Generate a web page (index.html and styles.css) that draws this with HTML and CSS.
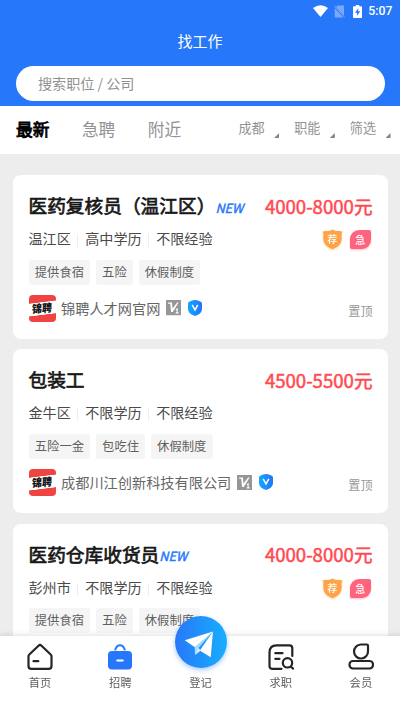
FILE: index.html
```html
<!DOCTYPE html>
<html lang="zh-CN">
<head>
<meta charset="utf-8">
<title>找工作</title>
<link rel="stylesheet" href="styles.css">
</head>
<body>
<svg class="defs" width="0" height="0" aria-hidden="true">
  <defs>
    <linearGradient id="blue" x1="0" y1="0" x2="1" y2="0"><stop offset="0" stop-color="#2878f8"/><stop offset="1" stop-color="#17aeff"/></linearGradient>
    <linearGradient id="shieldBlue" x1="0" y1="0" x2="1" y2="0"><stop offset="0" stop-color="#10a8ff"/><stop offset="1" stop-color="#2474f8"/></linearGradient>
  </defs>
  <symbol id="v1" viewBox="0 0 16 16"><path fill="#969696" d="M0 0h16v16H0z"/><path fill="#fff" d="M2.200 2.500h4l.5 6.200 4.800-6.200H13L7 12.300H5.200L4.400 3.800H2.200z"/><path fill="none" stroke="#fff" stroke-width="1.100" d="M10.200 10l1.300-.7v4M10 13.300h3"/></symbol>
  <symbol id="verified" viewBox="0 0 14 16"><path fill="url(#shieldBlue)" d="M3.500.8Q7-.7 10.500.8L12.800 1.800q1.200.6 1.200 1.700V9q0 5-7 7Q0 14 0 9V3.500q0-1.100 1.200-1.700z"/><path fill="none" stroke="#fff" stroke-width="1.500" d="M4.200 4.900L7 10l2.800-5.100"/></symbol>
  <symbol id="shield" viewBox="0 0 22 22"><path fill="#ffa348" d="M.4 2.3Q2 3 3.500 1.900 7 2.900 11 .4q4 2.500 7.500 1.500 1.500 1.100 3.100.4-.3 1.700-1.200 2.300.9 6.400-1 10.400Q17 19 11 21.200 5 19 2.600 15q-1.900-4-1-10.400Q.7 4 .4 2.300z"/></symbol>
</svg>

<header class="header">
  <div class="status">
    <svg width="15" height="12" viewBox="0 0 15 12"><path fill="#fff" d="M0 3Q7.500-2.600 15 3L7.500 12z"/></svg>
    <svg class="sim" width="11" height="13" viewBox="0 0 11 13"><path fill="#78a9fb" d="M3.500.5H10v10.200L2.100 2zM.7 3l8.600 9.500H.7z"/><path fill="none" stroke="#78a9fb" d="M.3.8l10.400 11.500"/></svg>
    <svg class="battery" width="9" height="13" viewBox="0 0 9 13"><path fill="#fff" d="M2.800 0h3.400v1.300H8q1 0 1 1V12q0 1-1 1H1q-1 0-1-1V2.300q0-1 1-1h1.800z"/><path fill="#2677f9" d="M5.300 3.200L2 7.700h2v3l3.200-4.500h-2z"/></svg>
    <span>5:07</span>
  </div>
  <h1 class="page-title">找工作</h1>
  <div class="search">搜索职位 / 公司</div>
</header>

<nav class="tabs">
  <span class="tab tab-active">最新</span><span class="tab">急聘</span><span class="tab">附近</span>
  <div class="filters"><span class="filter">成都</span><span class="filter">职能</span><span class="filter">筛选</span></div>
</nav>

<main class="jobs">
  <article class="card">
    <div class="row title-row"><h2>医药复核员（温江区）</h2><span class="new">NEW</span><strong class="salary">4000-8000元</strong></div>
    <div class="row info"><span>温江区</span><span>高中学历</span><span>不限经验</span>
      <div class="badges"><span class="recommend"><svg viewBox="0 0 22 22"><use href="#shield"/></svg><b>荐</b></span><span class="urgent">急</span></div></div>
    <div class="tags"><span>提供食宿</span><span>五险</span><span>休假制度</span></div>
    <div class="row company">
      <div class="logo"><span>锦聘</span></div><span>锦聘人才网官网</span><svg class="v1"><use href="#v1"/></svg><svg class="verified"><use href="#verified"/></svg><span class="pinned">置顶</span></div>
  </article>

  <article class="card">
    <div class="row title-row"><h2>包装工</h2><strong class="salary">4500-5500元</strong></div>
    <div class="row info"><span>金牛区</span><span>不限学历</span><span>不限经验</span></div>
    <div class="tags"><span>五险一金</span><span>包吃住</span><span>休假制度</span></div>
    <div class="row company">
      <div class="logo"><span>锦聘</span></div><span>成都川江创新科技有限公司</span><svg class="v1"><use href="#v1"/></svg><svg class="verified"><use href="#verified"/></svg><span class="pinned">置顶</span></div>
  </article>

  <article class="card">
    <div class="row title-row"><h2>医药仓库收货员</h2><span class="new">NEW</span><strong class="salary">4000-8000元</strong></div>
    <div class="row info"><span>彭州市</span><span>不限学历</span><span>不限经验</span>
      <div class="badges"><span class="recommend"><svg viewBox="0 0 22 22"><use href="#shield"/></svg><b>荐</b></span><span class="urgent">急</span></div></div>
    <div class="tags"><span>提供食宿</span><span>五险</span><span>休假制度</span></div>
  </article>
</main>

<footer class="bottom-nav">
  <div class="item"><svg width="26" height="28" viewBox="0 0 26 28"><path class="line" d="M2.300 11.500Q1.500 12.200 1.500 13.200V23q0 2.800 2.800 2.800h17.400q2.800 0 2.800-2.800v-9.800q0-1-.8-1.700L14.500 2.700q-1.500-1.400-3 0zM6.500 18.200h4.800"/></svg><span>首页</span></div>
  <div class="item"><svg width="26" height="28" viewBox="0 0 26 28"><path fill="none" stroke="#2677f9" stroke-width="2" stroke-linecap="round" d="M8.300 6.600Q9.600 2.200 13 2.200t4.700 4.400"/><rect x="1" y="8" width="24" height="18.500" rx="4" fill="#2677f9"/><path stroke="#fff" stroke-width="2" stroke-linecap="round" d="M10.300 17.500h5.400"/></svg><span>招聘</span></div>
  <div class="item"><div class="send"><svg width="52" height="52" viewBox="0 0 52 52"><circle cx="26" cy="26" r="26" fill="url(#blue)"/><path fill="#a5dcfb" d="M19.500 28L37.500 16 23 32.500 20 39z"/><path fill="#fff" d="M9.700 24.300L38 15.500 19.500 31zM38 15.500L35.700 41.300 24.800 34.500z"/><path fill="#d3effd" d="M20 39L25.800 34.500 23 31.500z"/></svg></div><span>登记</span></div>
  <div class="item"><svg width="26" height="28" viewBox="0 0 26 28"><path class="line" d="M13.500 25.800H4Q1.500 25.800 1.500 23V9.500q0-7.200 7-7.200h13q2.800 0 2.800 2.800V13M7.300 10.200h7.200M7.300 15.800h4.200M23.300 24l1.800 1.600"/><circle class="line" cx="19.500" cy="19.800" r="4.700"/></svg><span>求职</span></div>
  <div class="item"><svg width="26" height="28" viewBox="0 0 26 28"><path class="line" d="M12.800 1.500h6q1.200 0 1.200 1.200v5.500a7 7 0 1 1-7.200-6.700z"/><rect class="line" x="1.500" y="18" width="23.500" height="7.500" rx="3.500"/></svg><span>会员</span></div>
</footer>
</body>
</html>
```
FILE: styles.css
```css
* { box-sizing: border-box; }
body {
  margin: 0;
  width: 400px;
  height: 712px;
  overflow: hidden;
  background: #ededed;
  color: #4a4a4a;
  font-family: "Noto Sans CJK SC", sans-serif;
}
h1, h2 { margin: 0; }
.defs { position: absolute; }

.header { height: 106px; background: #2677f9; color: #fff; }
.status {
  height: 22px;
  padding: 0 7.500px 0 0;
  display: flex;
  align-items: center;
  justify-content: flex-end;
  font: 500 12.300px/23px Roboto, sans-serif;
}
.sim { margin-left: 6px; }
.battery { margin: 0 6.500px 0 7.500px; }
.page-title { height: 44px; text-align: center; font-size: 15px; line-height: 37px; font-weight: 400; }
.search {
  width: 369px;
  height: 35px;
  margin-left: 16px;
  padding-left: 22px;
  border-radius: 18px;
  background: #fff;
  color: #909090;
  font-size: 14.100px;
  line-height: 34px;
}

.tabs {
  height: 48px;
  padding: 0 9.500px 0 16px;
  display: flex;
  align-items: center;
  background: #fff;
  color: #929292;
}
.tab { margin-right: 32.500px; font-size: 16.700px; line-height: 46px; padding-bottom: 2px; }
.tab-active { color: #000; -webkit-text-stroke: .8px #000; }
.filters { margin-left: auto; display: flex; gap: 15px; }
.filter { display: flex; font-size: 13.100px; line-height: 43px; height: 48px; }
.filter::after {
  content: "";
  width: 5px;
  height: 5px;
  margin: 27px 0 0 9.500px;
  background: #858585;
  clip-path: polygon(100% 0, 100% 100%, 0 100%);
}

.jobs { padding: 21px 12px 0 12.500px; display: flex; flex-direction: column; gap: 10.800px; }
.card {
  height: 163.500px;
  flex: none;
  padding: 15px 15.500px 0 16px;
  border-radius: 8px;
  background: #fff;
}
.row { display: flex; align-items: center; white-space: nowrap; }
.title-row { height: 30px; }
.title-row h2 { font-size: 18.700px; line-height: 30px; color: #181818; font-weight: 400; -webkit-text-stroke: .7px #181818; }
.new { color: #2677f9; font-size: 12.700px; line-height: 20px; font-weight: 400; font-style: italic; padding-top: 5px; -webkit-text-stroke: .45px #2677f9; }
.salary { margin-left: auto; color: #ff4a52; font-size: 18.600px; font-weight: 400; -webkit-text-stroke: .5px #ff4a52; }
.info { height: 36px; font-size: 14.100px; }
.info > span + span::before {
  content: "";
  display: inline-block;
  width: 1px;
  height: 13px;
  margin: 0 7px 0 6.500px;
  background: #eee;
  vertical-align: -3px;
}
.badges { margin-left: auto; display: flex; gap: 7px; padding: 3px 1.700px 0 0; }
.recommend { position: relative; width: 21px; height: 21px; color: #fff; text-align: center; filter: drop-shadow(0 1px 1px #ffa34866); }
.recommend svg { display: block; width: 21px; height: 21px; }
.recommend b { position: absolute; inset: 0; font-size: 10px; line-height: 20px; font-weight: 500; }
.urgent {
  width: 21px;
  height: 19px;
  margin-top: 1px;
  border-radius: 9px 2px 9px 2px;
  background: #ff637d;
  color: #fff;
  font-size: 10px;
  line-height: 19px;
  font-weight: 500;
  text-align: center;
  box-shadow: 0 1px 2px #ff637d66;
}
.tags { display: flex; gap: 5.500px; margin-top: 3.700px; }
.tags span {
  height: 25px;
  padding: 0 6.300px;
  border-radius: 3px;
  background: #f5f5f5;
  color: #606060;
  font-size: 12.300px;
  line-height: 24px;
}
.company { height: 27px; margin-top: 10px; color: #666; font-size: 14.200px; }
.company > span:not(.pinned) { padding-bottom: 1px; }
.logo {
  width: 27px;
  height: 27px;
  margin-right: 5.500px;
  border-radius: 4px;
  background: linear-gradient(173deg, #f04443 28%, #fff 30% 70%, #f04443 72%);
  display: grid;
  place-items: center;
}
.logo span { color: #151515; font-size: 10px; line-height: 10px; font-weight: 900; transform: rotate(-5deg) skewX(-8deg) scaleY(1.1); }
.v1 { width: 15.500px; height: 15.500px; margin-left: 5.500px; }
.verified { width: 14px; height: 16px; margin-left: 6.500px; }
.pinned { margin: 5px 0 0 auto; color: #999; font-size: 12.100px; }

.bottom-nav {
  position: fixed;
  left: 0;
  bottom: 0;
  width: 401px;
  height: 76px;
  display: flex;
  background: #fff;
  box-shadow: 0 -1px 5px #0002;
}
.item { flex: 1; display: flex; flex-direction: column; align-items: center; padding-top: 7px; color: #5e5e5e; font-size: 11.300px; line-height: 18px; }
.item > svg { margin-bottom: 2px; }
.item .line { fill: none; stroke: #252525; stroke-width: 2.200; stroke-linecap: round; stroke-linejoin: round; }
.send { width: 52px; height: 52px; margin: -27px 0 5px; border-radius: 50%; box-shadow: 0 2px 5px #2677f966; }
.send svg { display: block; }
```
